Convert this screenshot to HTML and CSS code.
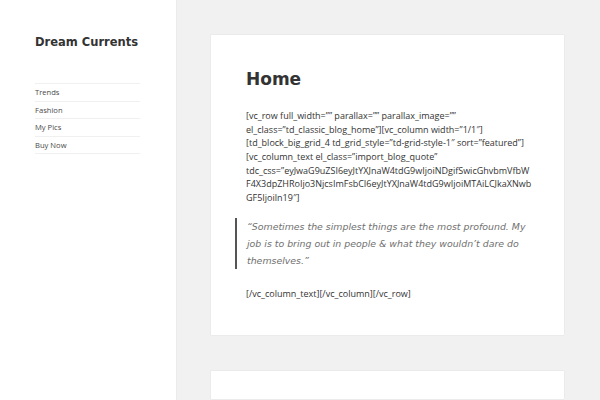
FILE: index.html
```html
<!DOCTYPE html>
<html>
<head>
<meta charset="utf-8">
<link rel="stylesheet" href="styles.css">
</head>
<body>
<div class="page">
  <aside class="sidebar">
    <h1 class="site-title">Dream Currents</h1>
    <nav class="menu">
      <a href="#">Trends</a>
      <a href="#">Fashion</a>
      <a href="#">My Pics</a>
      <a href="#">Buy Now</a>
    </nav>
  </aside>
  <main class="content">
    <article class="card">
      <h2 class="entry-title">Home</h2>
      <p class="code">[vc_row full_width=”” parallax=”” parallax_image=””<br>el_class=”td_classic_blog_home”][vc_column width=”1/1″]<br>[td_block_big_grid_4 td_grid_style=”td-grid-style-1″ sort=”featured”]<br>[vc_column_text el_class=”import_blog_quote”<br>tdc_css=”eyJwaG9uZSI6eyJtYXJnaW4tdG9wIjoiNDgifSwicGhvbmVfbW<br>F4X3dpZHRoIjo3NjcsImFsbCI6eyJtYXJnaW4tdG9wIjoiMTAiLCJkaXNwb<br>GF5Ijoiln19″]</p>
      <blockquote class="quote">“Sometimes the simplest things are the most profound. My job is to bring out in people &amp; what they wouldn’t dare do themselves.”</blockquote>
      <p class="code">[/vc_column_text][/vc_column][/vc_row]</p>
    </article>
    <article class="card card-next"></article>
  </main>
</div>
</body>
</html>
```
FILE: styles.css
```css
html, body {
  margin: 0;
  padding: 0;
  height: 100%;
  overflow: hidden;
}
body {
  background: #f1f1f1;
  font-family: "Open Sans", sans-serif;
  color: #333;
}
.page {
  display: flex;
  height: 400px;
  overflow: hidden;
}
.sidebar {
  width: 176px;
  flex: none;
  background: #fff;
  box-shadow: 0 0 1px rgba(0,0,0,0.15);
  padding: 34px 36px 0 35px;
  box-sizing: border-box;
}
.site-title {
  margin: 0;
  font-family: "DejaVu Sans", sans-serif;
  font-weight: bold;
  font-size: 11.5px;
  line-height: 16px;
  color: #333;
}
.menu {
  margin-top: 33px;
  display: flex;
  flex-direction: column;
  border-top: 1px solid #f0f0f0;
}
.menu a {
  display: block;
  font-size: 7.6px;
  line-height: 16.5px;
  color: #4a4a4a;
  text-decoration: none;
  border-bottom: 1px solid #f0f0f0;
}
.content {
  flex: 1;
  min-width: 0;
  padding: 35px 36px 0 35px;
  display: flex;
  flex-direction: column;
  gap: 36px;
  overflow: hidden;
}
.card {
  background: #fff;
  box-shadow: 0 0 1px rgba(0,0,0,0.15);
  padding: 33px 35px 34px 35px;
  flex: none;
  min-width: 0;
  overflow: hidden;
}
.card-next {
  height: 28px;
  padding: 0;
}
.entry-title {
  margin: 0 0 19px;
  font-family: "DejaVu Sans", sans-serif;
  font-weight: bold;
  font-size: 17px;
  line-height: 22px;
  color: #333;
}
.code {
  margin: 0;
  font-size: 9px;
  line-height: 13.65px;
  color: #333;
  white-space: nowrap;
}
.quote {
  margin: 13px 0 18px -11px;
  padding: 0 0 0 10px;
  border-left: 2px solid #555;
  font-family: "DejaVu Sans", sans-serif;
  font-style: italic;
  font-size: 9.4px;
  line-height: 17.3px;
  color: #707070;
}
```
